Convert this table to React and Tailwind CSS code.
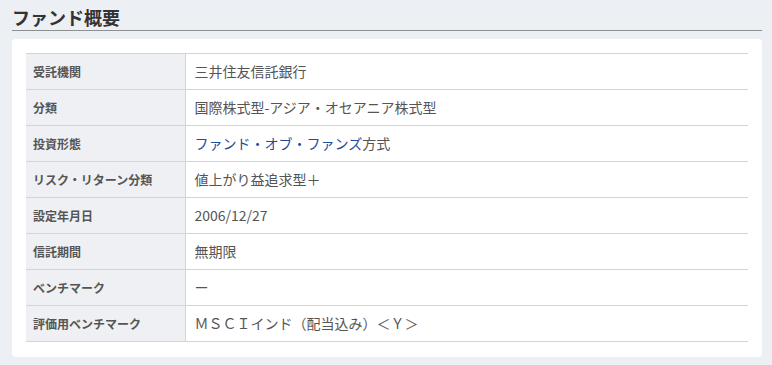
export default function App() {
  const rows = [
    ["受託機関", "三井住友信託銀行"],
    ["分類", "国際株式型-アジア・オセアニア株式型"],
    ["投資形態", "ファンド・オブ・ファンズ", "方式"],
    ["リスク・リターン分類", "値上がり益追求型＋"],
    ["設定年月日", "2006/12/27"],
    ["信託期間", "無期限"],
    ["ベンチマーク", "ー"],
    ["評価用ベンチマーク", "ＭＳＣＩインド（配当込み）＜Ｙ＞"],
  ];
  return (
    <div
      className="w-[772px] h-[365px] bg-[#eceff3] px-[12px] pt-[4px] pb-[9px]"
      style={{ fontFamily: '"Noto Sans CJK JP", "Noto Sans", sans-serif' }}
    >
      <div className="w-[750px] border-b border-[#8f8f8f] h-[27px] mb-[8px]">
        <h2 className="text-[18px] leading-[26px] font-bold text-[#333]">ファンド概要</h2>
      </div>
      <div className="w-[750px] bg-white rounded-[4px] px-[14px] pt-[14px] pb-[15px]">
        <table className="w-full border-collapse">
          <tbody>
            {rows.map((r, i) => (
              <tr key={i} className="border-y border-[#cfd5dd] h-[36px]">
                <th className="w-[159px] bg-[#eef0f4] text-left align-middle pl-[7px] text-[12px] font-bold text-[#555] border-r border-[#cfd5dd]">
                  {r[0]}
                </th>
                <td className="pl-[9px] align-middle text-[14px] text-[#555]">
                  {r.length === 3 ? (
                    <>
                      <span className="text-[#1d4c9a]">{r[1]}</span>
                      {r[2]}
                    </>
                  ) : (
                    r[1]
                  )}
                </td>
              </tr>
            ))}
          </tbody>
        </table>
      </div>
    </div>
  );
}
